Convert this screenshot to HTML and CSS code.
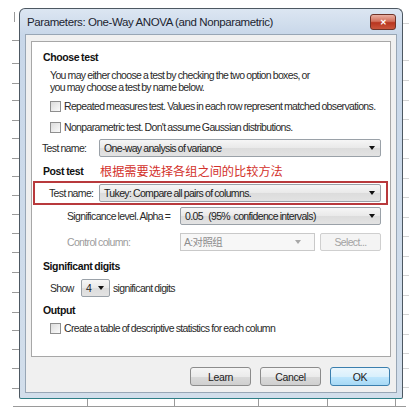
FILE: index.html
```html
<!DOCTYPE html>
<html lang="en">
<head>
    <meta charset="UTF-8">
    <title>Parameters: One-Way ANOVA</title>
    <link rel="stylesheet" href="styles.css">
</head>
<body>

<!-- spreadsheet grid peeking out behind the dialog -->
<svg class="backdrop" width="420" height="420" viewBox="0 0 420 420">
    <g stroke="#9a9a9a" stroke-width="1">
        <line x1="14.5" y1="12" x2="14.5" y2="22"/>
        <line x1="12" y1="40.5" x2="19" y2="40.5"/>
        <line x1="12" y1="63.5" x2="19" y2="63.5"/>
        <line x1="12" y1="83.5" x2="19" y2="83.5"/>
        <line x1="12" y1="100.5" x2="19" y2="100.5"/>
        <line x1="12" y1="120.5" x2="19" y2="120.5"/>
        <line x1="12" y1="138.5" x2="19" y2="138.5"/>
        <line x1="12" y1="158.5" x2="19" y2="158.5"/>
        <line x1="12" y1="176.5" x2="19" y2="176.5"/>
        <line x1="12" y1="195.5" x2="19" y2="195.5"/>
        <line x1="12" y1="214.5" x2="19" y2="214.5"/>
        <line x1="12" y1="233.5" x2="19" y2="233.5"/>
        <line x1="12" y1="252.5" x2="19" y2="252.5"/>
        <line x1="12" y1="272.5" x2="19" y2="272.5"/>
        <line x1="12" y1="292.5" x2="19" y2="292.5"/>
        <line x1="12" y1="312.5" x2="19" y2="312.5"/>
        <line x1="12" y1="330.5" x2="19" y2="330.5"/>
        <line x1="12" y1="349.5" x2="19" y2="349.5"/>
        <line x1="12" y1="368.5" x2="19" y2="368.5"/>
        <line x1="12" y1="388.5" x2="19" y2="388.5"/>
        <line x1="13" y1="406.5" x2="406" y2="406.5"/>
        <line x1="87.5" y1="399" x2="87.5" y2="406"/>
        <line x1="174.5" y1="399" x2="174.5" y2="406"/>
        <line x1="258.5" y1="399" x2="258.5" y2="406"/>
        <line x1="327.5" y1="399" x2="327.5" y2="406"/>
        <line x1="395.5" y1="399" x2="395.5" y2="406"/>
    </g>
    <g stroke="#d4d4d4" stroke-width="1">
        <line x1="403" y1="23.5" x2="409" y2="23.5"/>
        <line x1="403" y1="60.5" x2="409" y2="60.5"/>
        <line x1="403" y1="80.5" x2="409" y2="80.5"/>
        <line x1="403" y1="100.5" x2="409" y2="100.5"/>
        <line x1="403" y1="119.5" x2="409" y2="119.5"/>
        <line x1="403" y1="139.5" x2="409" y2="139.5"/>
        <line x1="403" y1="158.5" x2="409" y2="158.5"/>
        <line x1="403" y1="178.5" x2="409" y2="178.5"/>
        <line x1="403" y1="197.5" x2="409" y2="197.5"/>
        <line x1="403" y1="217.5" x2="409" y2="217.5"/>
        <line x1="403" y1="236.5" x2="409" y2="236.5"/>
        <line x1="403" y1="256.5" x2="409" y2="256.5"/>
        <line x1="403" y1="275.5" x2="409" y2="275.5"/>
        <line x1="403" y1="295.5" x2="409" y2="295.5"/>
        <line x1="403" y1="314.5" x2="409" y2="314.5"/>
        <line x1="403" y1="334.5" x2="409" y2="334.5"/>
        <line x1="403" y1="353.5" x2="409" y2="353.5"/>
        <line x1="403" y1="368.5" x2="409" y2="368.5"/>
        <line x1="403" y1="387.5" x2="409" y2="387.5"/>
    </g>
</svg>

<div class="window">
    <div class="titlebar">
        <span class="title">Parameters: One-Way ANOVA (and Nonparametric)</span>
        <span class="close">&#x2715;</span>
    </div>

    <div class="client">
        <div class="panel">
            <!-- Choose test -->
            <h3 class="heading">Choose test</h3>
            <p class="note">You may either choose a test by checking the two option boxes, or<br>you may choose a test by name below.</p>
            <label class="check first"><span class="box"></span>Repeated measures test. Values in each row represent matched observations.</label>
            <label class="check"><span class="box"></span>Nonparametric test. Don't assume Gaussian distributions.</label>
            <div class="row test-row">
                <span class="lbl name-lbl">Test name:</span>
                <div class="select wide">One-way analysis of variance<i class="arrow"></i></div>
            </div>

            <!-- Post test -->
            <div class="post-head">
                <h3 class="heading">Post test</h3>
                <span class="hint">根据需要选择各组之间的比较方法</span>
            </div>
            <div class="highlight">
                <span class="lbl hl-lbl">Test name:</span>
                <div class="select wide">Tukey: Compare all pairs of columns.<i class="arrow"></i></div>
            </div>
            <div class="row sub-row">
                <span class="lbl sub-lbl">Significance level. Alpha =</span>
                <div class="select alpha">0.05&nbsp;&nbsp;&nbsp;(95%&nbsp;&nbsp;confidence intervals)<i class="arrow"></i></div>
            </div>
            <div class="row sub-row control">
                <span class="lbl sub-lbl muted">Control column:</span>
                <div class="combo">A:对照组<i class="arrow"></i></div>
                <div class="btn-disabled">Select...</div>
            </div>

            <!-- Significant digits -->
            <h3 class="heading digits">Significant digits</h3>
            <div class="row show-row">
                <span class="lbl show-lbl">Show</span>
                <div class="select tiny">4<i class="arrow"></i></div>
                <span>significant digits</span>
            </div>

            <!-- Output -->
            <h3 class="heading output">Output</h3>
            <label class="check out"><span class="box"></span>Create a table of descriptive statistics for each column</label>
        </div>

        <div class="buttons">
            <button class="btn">Learn</button>
            <button class="btn">Cancel</button>
            <button class="btn ok">OK</button>
        </div>
    </div>
</div>

</body>
</html>
```

FILE: styles.css
```css
* {
    margin: 0;
    padding: 0;
    box-sizing: border-box;
}

body {
    width: 420px;
    height: 420px;
    background: #fff;
    font-family: "Liberation Sans", sans-serif;
    font-size: 10.5px;
    letter-spacing: -0.65px;
    word-spacing: -0.5px;
    color: #2a2a2a;
    position: relative;
    overflow: hidden;
    white-space: nowrap;
}

.backdrop {
    position: absolute;
    left: 0;
    top: 0;
}

/* Window frame */
.window {
    position: relative;
    margin: 8px 0 0 19px;
    width: 384px;
    height: 391px;
    border: 1px solid #4d5862;
    border-bottom-color: #2f7f86;
    border-radius: 6px 6px 2px 2px;
    background: linear-gradient(#dce6f2, #c8d7e9 26px, #d2deeb);
    padding: 0 5px 5px;
    display: flex;
    flex-direction: column;
}

.titlebar {
    height: 25px;
    display: flex;
    align-items: center;
    justify-content: space-between;
}

.title {
    font-size: 11.5px;
    color: #1c2430;
    padding-left: 2px;
    letter-spacing: -0.4px;
    word-spacing: 0;
}

.close {
    width: 26px;
    height: 16px;
    margin-top: 1px;
    margin-right: 1px;
    border: 1px solid #6e3328;
    border-radius: 3px;
    background: linear-gradient(#eab0a2, #d2705c 45%, #b8351f 55%, #c9553c);
    color: #fff;
    font-size: 8px;
    font-weight: bold;
    letter-spacing: 0;
    display: flex;
    align-items: center;
    justify-content: center;
}

.client {
    flex: 1;
    background: #f0f0f0;
    border: 1px solid #98a6b5;
    padding: 6px 5px 0;
}

/* White options panel */
.panel {
    height: 316px;
    background: #fff;
    border: 1px solid #a7a7a7;
    padding-top: 8px;
}

.heading {
    font-size: 10.5px;
    letter-spacing: -0.4px;
    font-weight: bold;
    color: #111;
    height: 14px;
    line-height: 14px;
    padding-left: 11px;
}

.note {
    margin-top: 5px;
    padding-left: 18px;
    line-height: 12px;
}

.check {
    display: flex;
    align-items: center;
    height: 16px;
    margin-top: 5px;
    padding-left: 18px;
}

.box {
    width: 11px;
    height: 11px;
    margin-right: 3px;
    border: 1px solid #8f8f8f;
    background: linear-gradient(135deg, #dcdcdc, #fbfbfb);
}

.row {
    display: flex;
    align-items: center;
    height: 18px;
}

.test-row {
    margin-top: 4px;
    padding-left: 10px;
}

.name-lbl {
    width: 57px;
}

.select {
    position: relative;
    height: 18px;
    line-height: 16px;
    padding-left: 4px;
    border: 1px solid #9aa1a8;
    border-radius: 2px;
    background: linear-gradient(#f6f6f6, #e9e9e9 50%, #dcdcdc 51%, #e3e3e3);
    color: #222;
}

.wide {
    width: 282px;
}

.arrow {
    position: absolute;
    right: 5px;
    top: 6px;
    border-left: 3.5px solid transparent;
    border-right: 3.5px solid transparent;
    border-top: 4px solid #111;
}

.post-head {
    display: flex;
    align-items: center;
    height: 18px;
    margin-top: 5px;
}

.post-head .heading {
    width: 68px;
}

.hint {
    font-family: "Noto Sans CJK SC", sans-serif;
    font-size: 12.2px;
    letter-spacing: 0;
    color: #d3312b;
}

.highlight {
    display: flex;
    align-items: center;
    margin: 1px 0 0 1px;
    width: 355px;
    height: 24px;
    border: 2px solid #b8393c;
    padding-left: 14px;
}

.hl-lbl {
    width: 50px;
}

.sub-row {
    margin-top: 2px;
    padding-left: 35px;
}

.sub-lbl {
    width: 113px;
}

.alpha {
    width: 201px;
}

.control {
    margin-top: 8px;
}

.muted {
    color: #9c9c9c;
}

.combo {
    position: relative;
    width: 135px;
    height: 18px;
    line-height: 16px;
    padding-left: 3px;
    border: 1px solid #c9c9c9;
    background: #f7f7f7;
    color: #8c8c8c;
    font-family: "Liberation Sans", "Noto Sans CJK SC", sans-serif;
}

.combo .arrow {
    right: 13px;
    border-top-color: #a8a8a8;
}

.btn-disabled {
    width: 61px;
    height: 18px;
    margin-left: 5px;
    line-height: 16px;
    text-align: center;
    border: 1px solid #cfcfcf;
    border-radius: 2px;
    background: #f4f4f4;
    color: #a3a3a3;
}

.digits {
    margin-top: 8px;
}

.show-row {
    margin-top: 6px;
    padding-left: 18px;
}

.show-lbl {
    width: 31px;
}

.tiny {
    width: 29px;
    margin-right: 3px;
}

.output {
    margin-top: 6px;
}

.out {
    margin-top: 3px;
}

/* Dialog buttons */
.buttons {
    display: flex;
    justify-content: flex-end;
    gap: 9px;
    margin-top: 10px;
    padding-right: 1px;
}

.btn {
    width: 61px;
    height: 19px;
    font-family: "Liberation Sans", sans-serif;
    font-size: 10.5px;
    letter-spacing: -0.4px;
    color: #222;
    border: 1px solid #8c8c8c;
    border-radius: 3px;
    background: linear-gradient(#f5f5f5, #ebebeb 50%, #dadada 51%, #cfcfcf);
}

.ok {
    width: 60px;
    border-color: #3b7fae;
    background: linear-gradient(#eaf6fd, #d9f0fc 50%, #bee6fd 51%, #a7d9f5);
}
```
